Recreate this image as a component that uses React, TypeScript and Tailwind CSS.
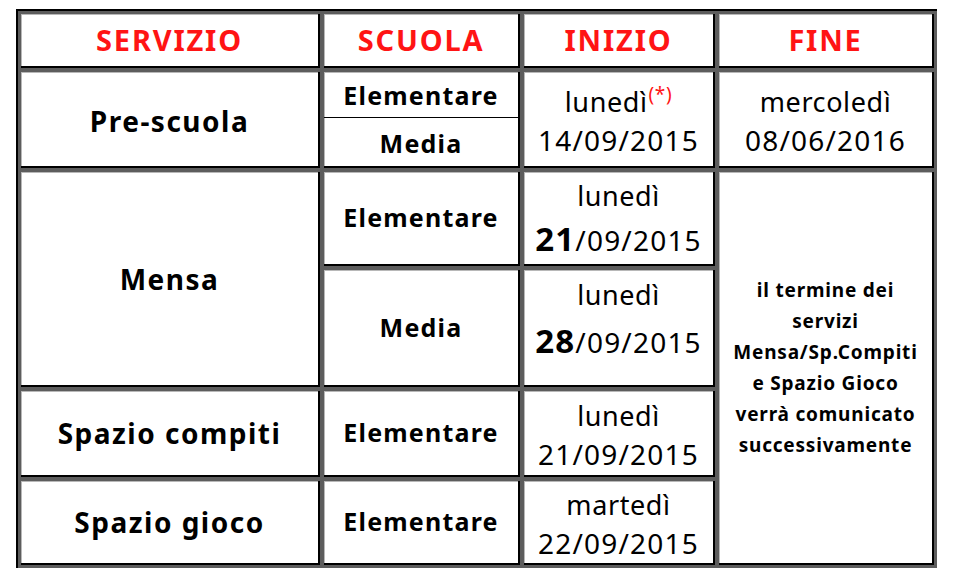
const font = { fontFamily: '"Comic Sans MS", "Noto Sans", "DejaVu Sans", sans-serif' };

const cell =
  "bg-white border-r-2 border-b-2 border-black shadow-[inset_1px_1px_0_#b8b8b8] flex flex-col items-center justify-center text-center text-black";

const service = "text-[28px] font-bold tracking-[1.5px]";
const school = "text-[25px] font-bold tracking-[1.2px]";

function Head({ children }: { children: React.ReactNode }) {
  return (
    <div className={cell}>
      <span className="text-[29px] font-bold tracking-[1.8px] text-[#ff1414] leading-none -mt-[2px]">{children}</span>
    </div>
  );
}

function Date({ day, date, star }: { day: string; date: React.ReactNode; star?: boolean }) {
  return (
    <div className="pt-[4px]">
      <div className="text-[27px] leading-[38px] tracking-[0.6px]">
        {day}
        {star && (
          <span className="text-[19px] text-[#ff1414] relative -top-[11px] ml-[1px] leading-none">(*)</span>
        )}
      </div>
      <div className="text-[28px] leading-[38px] tracking-[1.2px]">{date}</div>
    </div>
  );
}

export default function App() {
  return (
    <div className="w-[961px] h-[582px] bg-white overflow-hidden" style={font}>
      <div className="ml-[16px] mt-[9px] w-fit border-t-2 border-l-2 border-black bg-[#5d5d5d] p-[3px]">
        <div className="grid grid-cols-[299px_196px_191px_215px] grid-rows-[54px_96px_94px_117px_86px_84px] gap-[4px]">
          <Head>SERVIZIO</Head>
          <Head>SCUOLA</Head>
          <Head>INIZIO</Head>
          <Head>FINE</Head>

          {/* Pre-scuola */}
          <div className={cell}>
            <span className={service + " pt-[4px]"}>Pre-scuola</span>
          </div>
          <div className={cell + " !justify-start"}>
            <div className={"w-full h-[46px] border-b border-black flex items-center justify-center pt-[3px] " + school}>
              Elementare
            </div>
            <div className={"w-full flex-1 flex items-center justify-center pt-[4px] " + school}>Media</div>
          </div>
          <div className={cell}>
            <Date day="lunedì" date="14/09/2015" star />
          </div>
          <div className={cell}>
            <Date day="mercoledì" date="08/06/2016" />
          </div>

          {/* Mensa */}
          <div className={cell + " row-span-2"}>
            <span className={service}>Mensa</span>
          </div>
          <div className={cell}>
            <span className={school}>Elementare</span>
          </div>
          <div className={cell}>
            <div className="text-[27px] leading-[42px] tracking-[0.6px]">lunedì</div>
            <div className="text-[28px] leading-[44px] tracking-[1.2px]">
              <b className="text-[33px]">21</b>/09/2015
            </div>
          </div>
          <div className={cell + " row-span-4"}>
            <div className="text-[19px] font-bold leading-[31px] tracking-[0.8px]">
              il termine dei
              <br />
              servizi
              <br />
              Mensa/Sp.Compiti
              <br />
              e Spazio Gioco
              <br />
              verrà comunicato
              <br />
              successivamente
            </div>
          </div>

          <div className={cell}>
            <span className={school}>Media</span>
          </div>
          <div className={cell + " !justify-start pt-[4px]"}>
            <div className="text-[27px] leading-[42px] tracking-[0.6px]">lunedì</div>
            <div className="text-[28px] leading-[50px] tracking-[1.2px]">
              <b className="text-[33px]">28</b>/09/2015
            </div>
          </div>

          {/* Spazio compiti */}
          <div className={cell}>
            <span className={service}>Spazio compiti</span>
          </div>
          <div className={cell}>
            <span className={school}>Elementare</span>
          </div>
          <div className={cell}>
            <Date day="lunedì" date="21/09/2015" />
          </div>

          {/* Spazio gioco */}
          <div className={cell}>
            <span className={service}>Spazio gioco</span>
          </div>
          <div className={cell}>
            <span className={school}>Elementare</span>
          </div>
          <div className={cell}>
            <Date day="martedì" date="22/09/2015" />
          </div>
        </div>
      </div>
    </div>
  );
}
